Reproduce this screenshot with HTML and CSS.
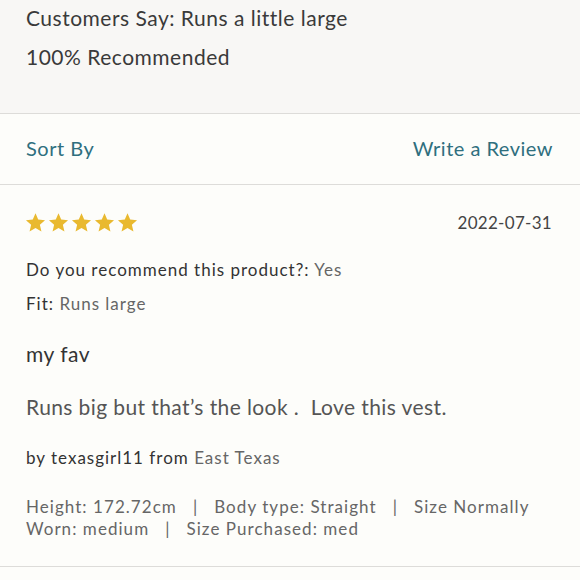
FILE: index.html
```html
<!DOCTYPE html>
<html>
<head>
<meta charset="utf-8">
<link rel="stylesheet" href="styles.css">
</head>
<body>
<section class="summary">
  <p class="summary-line">Customers Say: Runs a little large</p>
  <p class="summary-line second">100% Recommended</p>
</section>
<nav class="toolbar">
  <span class="link">Sort By</span>
  <span class="link">Write a Review</span>
</nav>
<article class="review">
  <div class="review-head">
    <div class="stars">
      <svg viewBox="0 0 24 24" class="star"><path d="M12 1.5l3.1 7.2 7.8.7-5.9 5.2 1.8 7.7L12 18.3l-6.8 4 1.8-7.7L1.1 9.4l7.8-.7z"/></svg>
      <svg viewBox="0 0 24 24" class="star"><path d="M12 1.5l3.1 7.2 7.8.7-5.9 5.2 1.8 7.7L12 18.3l-6.8 4 1.8-7.7L1.1 9.4l7.8-.7z"/></svg>
      <svg viewBox="0 0 24 24" class="star"><path d="M12 1.5l3.1 7.2 7.8.7-5.9 5.2 1.8 7.7L12 18.3l-6.8 4 1.8-7.7L1.1 9.4l7.8-.7z"/></svg>
      <svg viewBox="0 0 24 24" class="star"><path d="M12 1.5l3.1 7.2 7.8.7-5.9 5.2 1.8 7.7L12 18.3l-6.8 4 1.8-7.7L1.1 9.4l7.8-.7z"/></svg>
      <svg viewBox="0 0 24 24" class="star"><path d="M12 1.5l3.1 7.2 7.8.7-5.9 5.2 1.8 7.7L12 18.3l-6.8 4 1.8-7.7L1.1 9.4l7.8-.7z"/></svg>
    </div>
    <span class="date">2022-07-31</span>
  </div>
  <p class="field first"><span class="label">Do you recommend this product?:</span> <span class="value">Yes</span></p>
  <p class="field"><span class="label">Fit:</span> <span class="value">Runs large</span></p>
  <h3 class="title">my fav</h3>
  <p class="body">Runs big but that’s the look .&nbsp; Love this vest.</p>
  <p class="byline"><span class="label">by texasgirl11 from</span> <span class="value">East Texas</span></p>
  <p class="meta"><span>Height: 172.72cm</span><span class="sep">|</span><span>Body type: Straight</span><span class="sep">|</span><span>Size Normally</span> <span>Worn: medium</span><span class="sep">|</span><span>Size Purchased: med</span></p>
</article>
</body>
</html>
```
FILE: styles.css
```css
html, body {
  margin: 0;
  padding: 0;
}
body {
  background: #fdfdfa;
  font-family: Lato, "Noto Sans", sans-serif;
  color: #333333;
  width: 580px;
}
p, h3 { margin: 0; }

.summary {
  background: #f8f7f5;
  padding: 4px 26px 0;
  border-bottom: 1px solid #dddcd9;
  box-sizing: border-box;
  height: 114px;
}
.summary-line {
  font-size: 21px;
  line-height: 27px;
  letter-spacing: 0.5px;
  color: #3a3a3a;
}
.summary-line.second { margin-top: 12px; }

.toolbar {
  display: flex;
  justify-content: space-between;
  align-items: center;
  height: 70px;
  padding: 0 27px 0 26px;
  border-bottom: 1px solid #dddcd9;
}
.link {
  color: #2f6f7e;
  font-size: 20px;
  letter-spacing: 0.5px;
  padding-bottom: 3px;
}

.review {
  padding: 26px 28px 0 25px;
  height: 355px;
  border-bottom: 1px solid #dddcd9;
}
.review-head {
  display: flex;
  justify-content: space-between;
  align-items: center;
}
.stars { display: flex; gap: 2px; }
.star {
  width: 21px;
  height: 21px;
  fill: #e9b92f;
}
.date {
  font-size: 17px;
  color: #444;
  letter-spacing: 0.3px;
  margin-top: 1px;
}
.field {
  font-size: 17px;
  line-height: 22px;
  letter-spacing: 1px;
  margin-top: 12px;
  padding-left: 1px;
}
.field.first { margin-top: 26px; }
.label { color: #333; }
.value { color: #666; }
.title {
  font-weight: normal;
  font-size: 21px;
  line-height: 27px;
  letter-spacing: 0.5px;
  color: #333;
  margin-top: 25px;
  padding-left: 1px;
}
.body {
  font-size: 21px;
  line-height: 27px;
  letter-spacing: 0.4px;
  color: #555;
  margin-top: 26px;
  padding-left: 1px;
}
.byline {
  font-size: 17px;
  line-height: 22px;
  letter-spacing: 1px;
  margin-top: 27px;
  padding-left: 1px;
}
.meta {
  font-size: 17px;
  line-height: 22px;
  letter-spacing: 1.05px;
  color: #666;
  margin-top: 27px;
  width: 522px;
  padding-left: 1px;
}
.sep { margin: 0 16px; }
```
